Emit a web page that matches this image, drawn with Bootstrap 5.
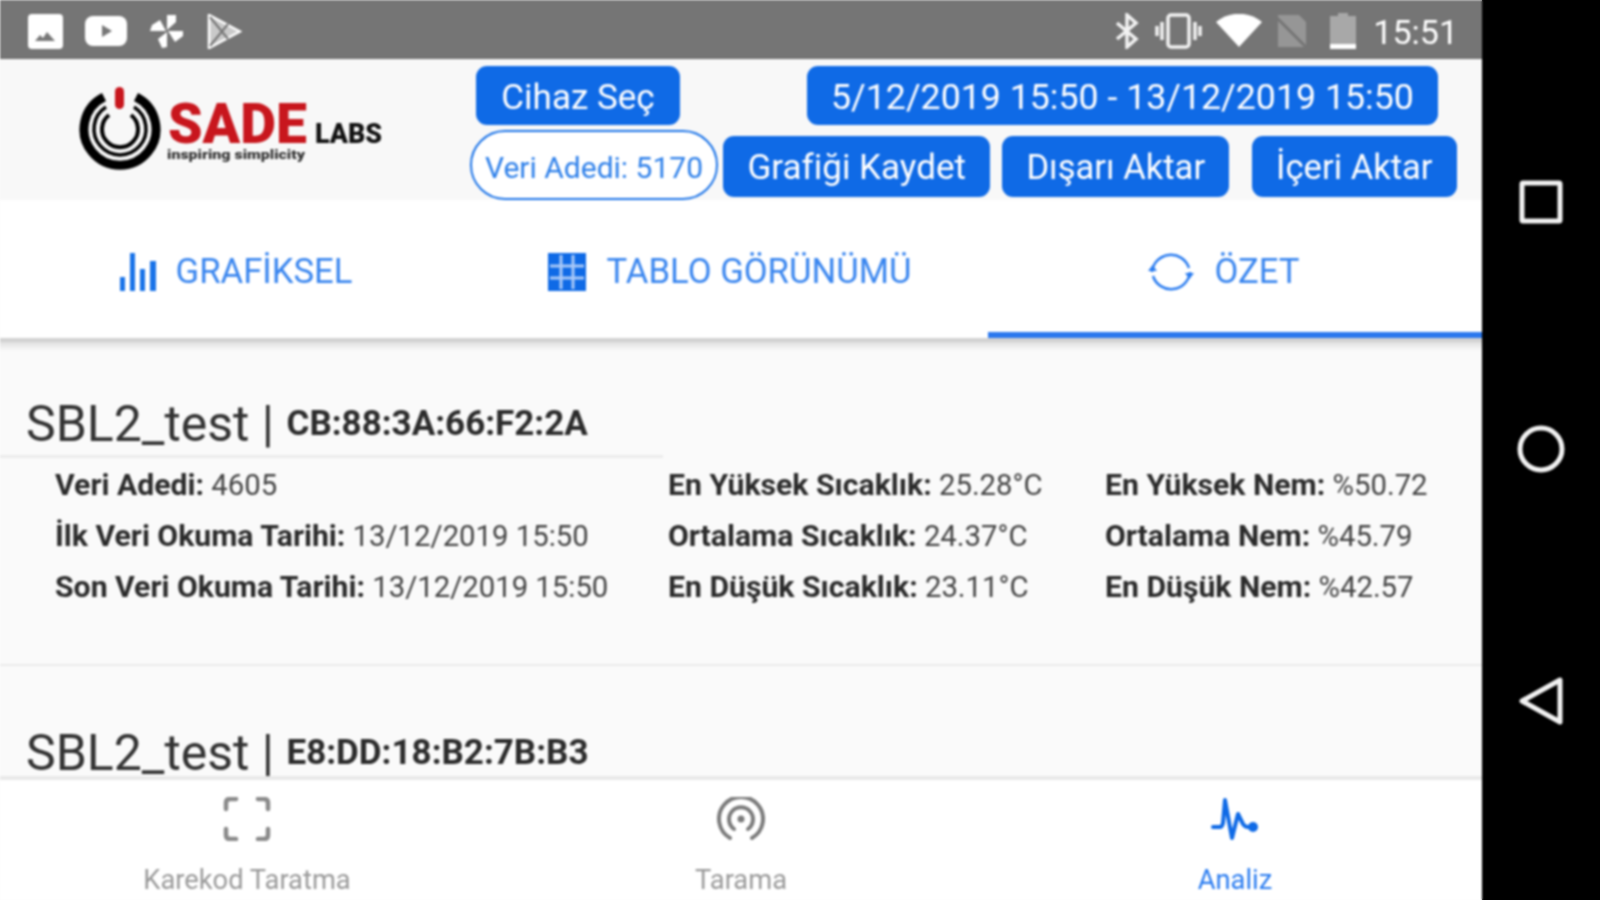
<!DOCTYPE html>
<html lang="tr">
<head>
<meta charset="utf-8">
<title>SADE Labs</title>
<link rel="stylesheet" href="https://cdn.jsdelivr.net/npm/bootstrap@5.3.0/dist/css/bootstrap.min.css">
<style>
html,body{height:900px;overflow:hidden}
body{font-family:Roboto,"Liberation Sans",sans-serif;background:linear-gradient(to right,#fbfbfb 1482px,#000 1482px);color:#333}
.shot{width:1600px;height:900px;filter:blur(.8px)}
.phone{width:1482px;height:900px;background:#fafafa}
.keys{width:118px;height:900px;background:#000;padding:180px 0 0}
.key-b{margin-top:200px}
.key-c{margin-top:202px}
.status{height:59px;background:#757575;padding:4px 24px 0 28px;border-bottom:1px solid #6d6d6d}
.status-left{gap:22px}
.status-right{gap:14px}
.st-sim{margin-right:8px}
.st-bt{margin-right:2px}
.clock{font-size:34px;color:#fff;line-height:1;margin:2px 0 0 3px}
.top{height:141px;background:#f8f8f8}
.logo-box{width:470px;padding:26px 0 0 78px}
.acts{flex:1;padding-top:7px}
.act-a{padding-left:6px;gap:127px;margin-bottom:5px}
.act-b{gap:0}
.bluebtn{background:#0f6ae6;border:0;border-radius:11px;color:#fff;font-size:35px;line-height:1;height:59px;padding:4px 24px 0;white-space:nowrap;--bs-btn-bg:#0f6ae6;--bs-btn-hover-bg:#0f6ae6}
.bluebtn.pick-btn{min-width:204px}
.bluebtn.date-btn{font-size:35.7px}
.bluebtn.tall{height:61px;margin-top:6px;padding:2px 24px 0}
.bluebtn.tall.save-btn{padding:2px 24.5px 0}
.bluebtn.tall.ml-b,.bluebtn.tall.ml-c{font-size:34.6px}
.ml-a{margin-left:5px}
.ml-b{margin-left:12px}
.ml-c{margin-left:23px}
.pill{width:248px;height:70px;border:2px solid #1a73e8;border-radius:35px;color:#2e80ea;font-size:30px;background:#fff;white-space:nowrap;padding-top:4px}
.tabs{height:142px;background:#fff;border-bottom:4px solid #d2d2d2}
.tabitem{width:494px;height:138px;color:#3a86ef;font-size:34.7px;gap:20px;padding:11px 22px 0 0;border-bottom:6px solid transparent}
.tabitem.on{border-bottom-color:#2a78ee}
.feed{flex:1;overflow:hidden;background:#fafafa linear-gradient(#e0e0e0,#fafafa 9px) no-repeat;min-height:0}
.dev{padding-top:48px;border-bottom:2px solid #ebebeb;height:324px}
.dev+.dev{padding-top:53px}
.dev-title{width:663px;height:68px;padding-left:26px;border-bottom:3px solid #ececec;font-size:50px;color:#333;line-height:68px;white-space:nowrap;margin:0;font-weight:400}
.dev-title b{font-size:35px;font-weight:700;color:#2c2c2c;vertical-align:6px;line-height:1}
.cells{padding:0 0 0 55px;font-size:29.3px;color:#444;line-height:51px;margin-top:2px;white-space:nowrap}
.cells b{font-size:30.2px;font-weight:700;color:#2b2b2b;line-height:1}
.c1{width:613px}
.c2{width:437px}
.tabbar{height:124px;background:#fff;border-top:4px solid #e9e9e9}
.baritem{width:494px;color:#9a9a9a;font-size:27.3px;line-height:1;padding-top:17px}
.baritem.on{color:#2a7cf0}
.baritem svg{display:block;margin-bottom:26px}
</style>
</head>
<body>
<div class="shot d-flex">
  <div class="phone d-flex flex-column">
    <div class="status d-flex align-items-center justify-content-between">
      <div class="status-left d-flex align-items-center">
        <svg width="35" height="35" viewBox="0 0 35 35"><rect width="35" height="35" rx="4" fill="#fff"/><path d="M7 27l5-6 3 3 4-6 8 9z" fill="#777"/></svg>
        <svg width="42" height="30" viewBox="0 0 42 30"><rect width="42" height="30" rx="8" fill="#fff"/><path d="M17 9l10 6-10 6z" fill="#777"/></svg>
        <svg width="36" height="36" viewBox="0 0 36 36" fill="#fff"><path d="M18 17L18 2l9 0 0 7z"/><path d="M19 18l15 0 0 5-8 6z"/><path d="M18 19l0 15-5 1-4-9z"/><path d="M17 18L1 18l2-6 8-5z"/></svg>
        <svg width="35" height="35" viewBox="0 0 35 35"><path d="M2 1l31 16.500L2 34z" fill="#c9c9c9"/><path d="M2 1l31 16.500L2 34z" fill="none" stroke="#fff" stroke-width="2.500"/><path d="M3 3l18 22M3 32L21 10" fill="none" stroke="#757575" stroke-width="2"/></svg>
      </div>
      <div class="status-right d-flex align-items-center">
        <svg class="st-bt" width="24" height="36" viewBox="0 0 24 36" fill="none" stroke="#f2f2f2" stroke-width="3.500"><path d="M2 10l19 16-9 8V2l9 8L2 26"/></svg>
        <svg width="47" height="36" viewBox="0 0 47 36" fill="none" stroke="#f2f2f2"><rect x="13" y="2" width="21" height="32" rx="3" stroke-width="3.500"/><path d="M7 9v18M2 13v10M40 9v18M45 13v10" stroke-width="3.500"/></svg>
        <svg width="46" height="34" viewBox="0 0 46 34"><path d="M23 33L0 8C13-3 33-3 46 8z" fill="#fff"/></svg>
        <svg class="st-sim" width="32" height="36" viewBox="0 0 32 36"><path d="M2 2h21l7 7v25H2z" fill="#969696"/><path d="M0 4l32 32" stroke="#757575" stroke-width="3"/></svg>
        <svg width="26" height="36" viewBox="0 0 26 36"><path d="M8 0h10v3h8v33H0V3h8z" fill="#a8a8a8"/><rect y="31" width="26" height="5" fill="#fff"/></svg>
        <span class="clock">15:51</span>
      </div>
    </div>
    <div class="top d-flex">
      <div class="logo-box">
        <svg width="312" height="90" viewBox="0 0 312 90">
          <g fill="none" stroke="#000">
            <path d="M26 12A36 36 0 1 0 58 12" stroke-width="9"/>
            <path d="M28 22A26 26 0 1 0 56 22" stroke-width="3.500"/>
            <path d="M31 30A18 18 0 1 0 53 30" stroke-width="4"/>
          </g>
          <rect x="37" y="2" width="9" height="22" rx="4.500" fill="#c8161d"/>
          <text x="90" y="58" font-family="Roboto,sans-serif" font-weight="900" font-size="56" fill="#c8161d" textLength="139" lengthAdjust="spacingAndGlyphs">SADE</text>
          <text x="237" y="58" font-family="Roboto,sans-serif" font-weight="900" font-size="28" fill="#111" textLength="67" lengthAdjust="spacingAndGlyphs">LABS</text>
          <text x="89" y="74" font-family="Roboto,sans-serif" font-weight="900" font-size="13" fill="#333" textLength="138" lengthAdjust="spacingAndGlyphs">inspiring simplicity</text>
        </svg>
      </div>
      <div class="acts">
        <div class="act-a d-flex">
          <button class="btn bluebtn pick-btn">Cihaz Seç</button>
          <button class="btn bluebtn date-btn">5/12/2019 15:50 - 13/12/2019 15:50</button>
        </div>
        <div class="act-b d-flex align-items-start">
          <div class="pill d-flex align-items-center justify-content-center">Veri Adedi: 5170</div>
          <button class="btn bluebtn tall save-btn ml-a">Grafiği Kaydet</button>
          <button class="btn bluebtn tall ml-b">Dışarı Aktar</button>
          <button class="btn bluebtn tall ml-c">İçeri Aktar</button>
        </div>
      </div>
    </div>
    <div class="tabs d-flex">
      <div class="tabitem d-flex align-items-center justify-content-center">
        <svg width="36" height="38" viewBox="0 0 36 38" fill="#1a73e8"><rect x="0" y="24" width="5" height="14"/><rect x="10" y="0" width="5" height="38"/><rect x="20" y="16" width="5" height="22"/><rect x="30" y="8" width="6" height="30"/></svg>
        <span>GRAFİKSEL</span>
      </div>
      <div class="tabitem d-flex align-items-center justify-content-center">
        <svg width="38" height="38" viewBox="0 0 38 38"><rect width="38" height="38" fill="#0f6ae6"/><path d="M13 2v34M25 2v34M2 13h34M2 25h34" stroke="#a9c9f8" stroke-width="3"/></svg>
        <span>TABLO GÖRÜNÜMÜ</span>
      </div>
      <div class="tabitem on d-flex align-items-center justify-content-center">
        <svg width="46" height="42" viewBox="0 0 46 42" fill="none" stroke="#2a7cf0" stroke-width="2.500"><path d="M4 21A19 19 0 0 1 41 17"/><path d="M42 21A19 19 0 0 1 5 25"/><path d="M0 20h9l-4.500-6z M37 22h9l-4.500 6z" fill="#2a7cf0" stroke="none"/></svg>
        <span>ÖZET</span>
      </div>
    </div>
    <div class="feed">
      <section class="dev">
        <h2 class="dev-title">SBL2_test | <b>CB:88:3A:66:F2:2A</b></h2>
        <div class="cells d-flex">
          <div class="c1">
            <div><b>Veri Adedi:</b> 4605</div>
            <div><b>İlk Veri Okuma Tarihi:</b> 13/12/2019 15:50</div>
            <div><b>Son Veri Okuma Tarihi:</b> 13/12/2019 15:50</div>
          </div>
          <div class="c2">
            <div><b>En Yüksek Sıcaklık:</b> 25.28°C</div>
            <div><b>Ortalama Sıcaklık:</b> 24.37°C</div>
            <div><b>En Düşük Sıcaklık:</b> 23.11°C</div>
          </div>
          <div>
            <div><b>En Yüksek Nem:</b> %50.72</div>
            <div><b>Ortalama Nem:</b> %45.79</div>
            <div><b>En Düşük Nem:</b> %42.57</div>
          </div>
        </div>
      </section>
      <section class="dev">
        <h2 class="dev-title">SBL2_test | <b>E8:DD:18:B2:7B:B3</b></h2>
      </section>
    </div>
    <nav class="tabbar d-flex">
      <div class="baritem d-flex flex-column align-items-center">
        <svg width="48" height="44" viewBox="0 0 48 44" fill="none" stroke="#8a8a8a" stroke-width="4.500" stroke-linecap="round"><path d="M3 12V6q0-4 4-4h6M35 2h6q4 0 4 4v6M45 32v6q0 4-4 4h-6M13 42H7q-4 0-4-4v-6"/></svg>
        <span>Karekod Taratma</span>
      </div>
      <div class="baritem d-flex flex-column align-items-center">
        <svg width="48" height="44" viewBox="0 0 48 44" fill="none" stroke="#7c7c7c" stroke-linecap="round"><path d="M13 41A22 22 0 1 1 35 41" stroke-width="4"/><path d="M17 32A12 12 0 1 1 31 32" stroke-width="4"/><circle cx="24" cy="22" r="3.500" fill="#7c7c7c" stroke="none"/></svg>
        <span>Tarama</span>
      </div>
      <div class="baritem on d-flex flex-column align-items-center">
        <svg width="48" height="44" viewBox="0 0 48 44" fill="none" stroke="#0f6ae6" stroke-width="4" stroke-linecap="round" stroke-linejoin="round"><path d="M2 30h7q2 0 3-4L14 3l7 38 6-24 5 10q2 3 5 3h7"/><circle cx="42" cy="30" r="5" fill="#0f6ae6" stroke="none"/></svg>
        <span>Analiz</span>
      </div>
    </nav>
  </div>
  <div class="keys d-flex flex-column align-items-center">
    <svg width="44" height="44" viewBox="0 0 44 44" fill="none" stroke="#f2f2f2" stroke-width="5"><rect x="3" y="3" width="38" height="38" rx="1"/></svg>
    <svg class="key-b" width="50" height="50" viewBox="0 0 50 50" fill="none" stroke="#f2f2f2" stroke-width="5"><circle cx="25" cy="25" r="21"/></svg>
    <svg class="key-c" width="46" height="50" viewBox="0 0 46 50" fill="none" stroke="#f2f2f2" stroke-width="5" stroke-linejoin="round"><path d="M42 4v42L4 25z"/></svg>
  </div>
</div>
</body>
</html>
